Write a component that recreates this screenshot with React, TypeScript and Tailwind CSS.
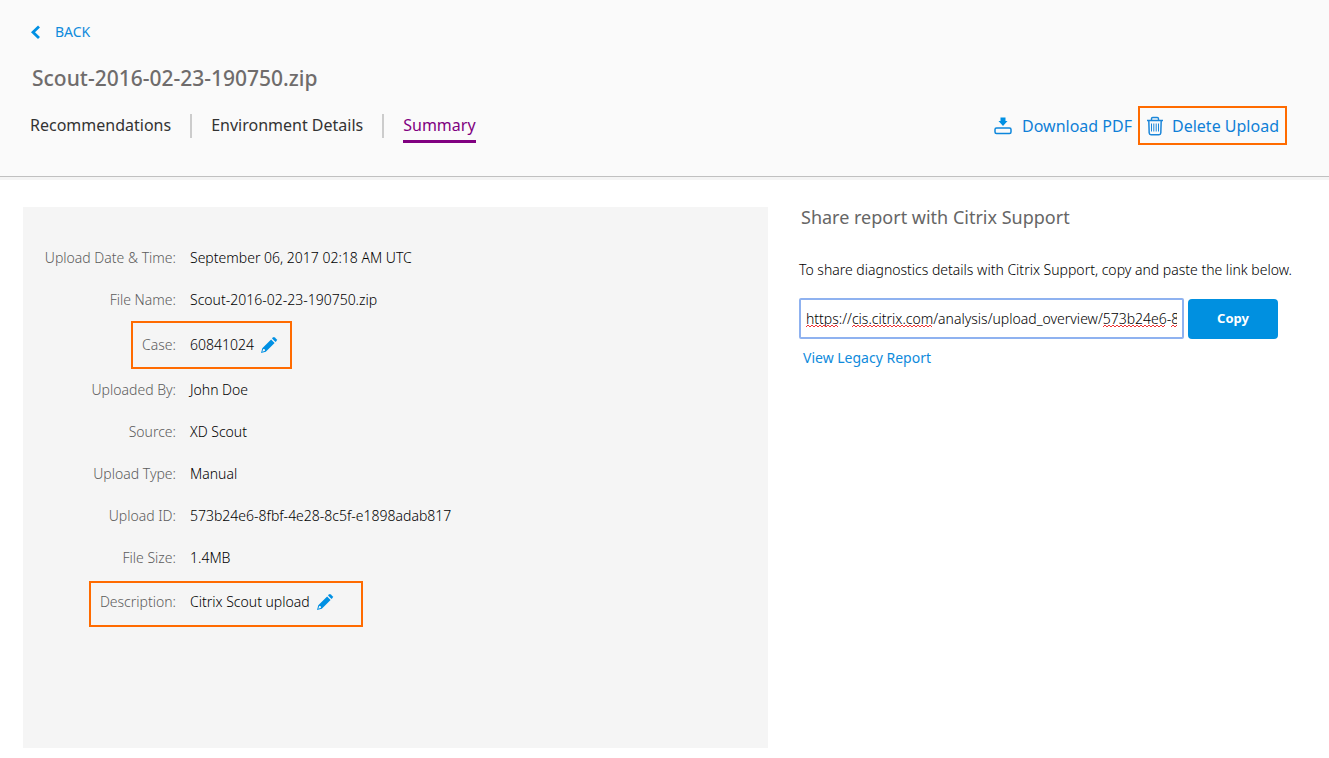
import { type ReactNode } from "react";

type Detail = {
  label: string;
  value: string;
  row?: string;
  highlight?: string;
};

const details: Detail[] = [
  { label: "Upload Date & Time:", value: "September 06, 2017 02:18 AM UTC" },
  { label: "File Name:", value: "Scout-2016-02-23-190750.zip" },
  { label: "Case:", value: "60841024", row: "h-12", highlight: "left-[108px] w-[161px]" },
  { label: "Uploaded By:", value: "John Doe" },
  { label: "Source:", value: "XD Scout" },
  { label: "Upload Type:", value: "Manual" },
  { label: "Upload ID:", value: "573b24e6-8fbf-4e28-8c5f-e1898adab817" },
  { label: "File Size:", value: "1.4MB" },
  { label: "Description:", value: "Citrix Scout upload", row: "mt-0.5 h-[46px] pb-1", highlight: "left-[66px] w-[274px]" },
];

function PencilIcon() {
  return (
    <svg width="18" height="18" viewBox="0 0 18 18" aria-hidden="true">
      <path
        fill="#0090e3"
        fillRule="evenodd"
        d="M1 17 L2.3 12.2 L11.1 3.4 L14.6 6.9 L5.8 15.7 Z M3.2 13 L2.3 15.7 L5 14.8 L4.8 13.3 Z"
      />
      <path fill="#0090e3" d="M12 2.5 L13 1.5 Q13.9 0.7 14.8 1.4 L16.6 3.2 Q17.3 4.1 16.5 5 L15.5 6 Z" />
    </svg>
  );
}

function DownloadIcon() {
  return (
    <svg width="18" height="18" viewBox="0 0 18 18" aria-hidden="true">
      <path fill="#0090e3" d="M6.5 0.5 H11.5 V4 H13.5 L9 9 L4.5 4 H6.5 Z" />
      <rect x="1" y="11" width="16" height="5.5" rx="1.5" fill="none" stroke="#0c86dc" strokeWidth="1.5" />
    </svg>
  );
}

function TrashIcon() {
  return (
    <svg width="18" height="20" viewBox="0 0 18 20" fill="none" stroke="#1b86d9" aria-hidden="true">
      <path strokeWidth="1.5" d="M1 4.5 H17 M2.8 4.5 L3.2 17 Q3.3 18.7 5 18.7 H13 Q14.7 18.7 14.8 17 L15.2 4.5" />
      <path strokeWidth="1.4" d="M5.5 4.2 V2.8 Q5.5 1.5 6.8 1.5 H11.2 Q12.5 1.5 12.5 2.8 V4.2" />
      <path strokeWidth="1" d="M5.5 7.5 V15.5 M7.8 7.5 V15.5 M10.2 7.5 V15.5 M12.5 7.5 V15.5" />
    </svg>
  );
}

function wave(from: number, to: number) {
  let d = `M${from} 3`;
  for (let x = from + 2, up = true; x <= to; x += 2, up = !up) d += ` L${x} ${up ? 1 : 3}`;
  return d;
}

function Tab({ children, active }: { children: ReactNode; active?: boolean }) {
  return (
    <a
      href="#"
      aria-current={active ? "page" : undefined}
      className={
        active
          ? "border-b-3 border-[#800080] pt-[5px] pb-[3px] text-[#800080]"
          : "border-b-3 border-transparent pt-[5px] pb-[3px] text-[#333]"
      }
    >
      {children}
    </a>
  );
}

export default function App() {
  return (
    <div className="min-h-screen bg-white font-['Noto_Sans',sans-serif] text-sm text-black">
      <header className="border-b border-[#c0c0c0] bg-[#fafafa] pt-[22px] pr-[42px] pb-[31px] pl-[30px]">
        <a href="#" className="inline-flex h-5 items-center gap-3.5 text-[#0f8bdc]">
          <svg width="11" height="14" viewBox="0 0 11 14" fill="none" aria-hidden="true">
            <path d="M9 1.5 L3 7.2 L9 13" stroke="#0090e3" strokeWidth="2.8" />
          </svg>
          BACK
        </a>
        <h1 className="mt-5 pl-0.5 text-[21px] leading-7 font-medium text-[#6f6c6c]">Scout-2016-02-23-190750.zip</h1>
        <div className="mt-3.5 flex items-center justify-between text-base">
          <nav className="flex items-center gap-[19px] leading-6">
            <Tab>Recommendations</Tab>
            <span className="h-6 w-0.5 bg-[#ccc]" />
            <Tab>Environment Details</Tab>
            <span className="h-6 w-0.5 bg-[#ccc]" />
            <Tab active>Summary</Tab>
          </nav>
          <div className="flex items-center gap-1.5 text-[#0f80d7]">
            <button type="button" className="flex items-center gap-2.5">
              <DownloadIcon />
              Download PDF
            </button>
            <button type="button" className="flex h-[39px] items-center gap-2 border-2 border-[#ff6b00] px-1.5">
              <TrashIcon />
              Delete Upload
            </button>
          </div>
        </div>
      </header>
      <div className="h-[3px] bg-[#f4f4f4]" />

      <main className="flex gap-[31px] pt-[27px] pr-[30px] pb-2.5 pl-[23px]">
        <section className="min-h-[541px] min-w-0 flex-[745] bg-[#f5f5f5] pt-[30px]">
          <dl className="font-light">
            {details.map((d) => (
              <div key={d.label} className={`relative flex items-center ${d.row ?? "h-[42px]"}`}>
                <dt className="w-[153px] text-right text-[#5c5c5c]">{d.label}</dt>
                <dd className="flex items-center gap-1.5 pl-3.5">
                  {d.value}
                  {d.highlight && (
                    <button type="button" aria-label={`Edit ${d.label}`}>
                      <PencilIcon />
                    </button>
                  )}
                </dd>
                {d.highlight && (
                  <span className={`pointer-events-none absolute inset-y-0 border-2 border-[#ff6b00] ${d.highlight}`} />
                )}
              </div>
            ))}
          </dl>
        </section>

        <section className="min-w-0 flex-[500]">
          <h2 className="pl-0.5 text-lg leading-5 text-[#666]">Share report with Citrix Support</h2>
          <label htmlFor="share-link" className="mt-[33px] block leading-5 font-light whitespace-nowrap">
            To share diagnostics details with Citrix Support, copy and paste the link below.
          </label>
          <div className="mt-[18px] flex items-center gap-1">
            <div className="relative w-[385px]">
              <input
                id="share-link"
                type="text"
                spellCheck={false}
                defaultValue="https://cis.citrix.com/analysis/upload_overview/573b24e6-8fbf-4e28-8c5f-e1898adab817"
                className="h-[41px] w-full rounded-xs border-2 border-[#8fb2f0] bg-white px-[5px] font-light outline-none"
              />
              <svg className="pointer-events-none absolute bottom-[11px] left-[7px]" width="373" height="4" viewBox="0 0 373 4" fill="none" stroke="#ee3333" aria-hidden="true">
                <path d={wave(0, 32)} />
                <path d={wave(46, 126)} />
                <path d={wave(297, 360)} />
                <path d={wave(365, 372)} />
              </svg>
            </div>
            <button type="button" className="h-10 w-[90px] rounded bg-[#0090e0] text-[13px] font-bold text-white">
              Copy
            </button>
          </div>
          <a href="#" className="mt-[9px] ml-1 inline-block leading-5 text-[#0f8bdc]">
            View Legacy Report
          </a>
        </section>
      </main>
    </div>
  );
}
